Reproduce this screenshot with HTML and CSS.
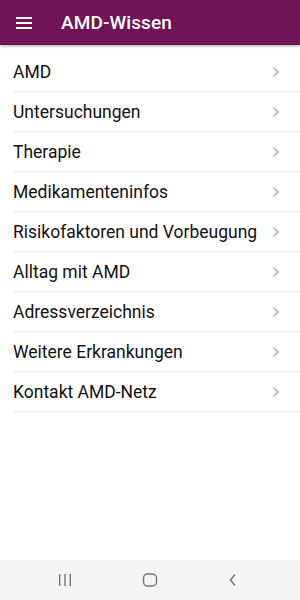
FILE: index.html
```html
<!DOCTYPE html>
<html lang="de">
<head>
<meta charset="utf-8">
<link rel="stylesheet" href="styles.css">
</head>
<body>
<div class="screen">
  <header class="appbar">
    <svg class="menu" width="16" height="12" viewBox="0 0 16 12"><rect x="0" y="0" width="16" height="2" fill="#fff"/><rect x="0" y="5" width="16" height="2" fill="#fff"/><rect x="0" y="10" width="16" height="2" fill="#fff"/></svg>
    <h1 class="title">AMD-Wissen</h1>
  </header>
  <ul class="list">
    <li class="item"><span>AMD</span><svg class="chev" width="8" height="12" viewBox="0 0 8 12"><path d="M1.5 1.5 L6 6 L1.5 10.5" fill="none" stroke="#b8b8b8" stroke-width="1.6"/></svg></li>
    <li class="item"><span>Untersuchungen</span><svg class="chev" width="8" height="12" viewBox="0 0 8 12"><path d="M1.5 1.5 L6 6 L1.5 10.5" fill="none" stroke="#b8b8b8" stroke-width="1.6"/></svg></li>
    <li class="item"><span>Therapie</span><svg class="chev" width="8" height="12" viewBox="0 0 8 12"><path d="M1.5 1.5 L6 6 L1.5 10.5" fill="none" stroke="#b8b8b8" stroke-width="1.6"/></svg></li>
    <li class="item"><span>Medikamenteninfos</span><svg class="chev" width="8" height="12" viewBox="0 0 8 12"><path d="M1.5 1.5 L6 6 L1.5 10.5" fill="none" stroke="#b8b8b8" stroke-width="1.6"/></svg></li>
    <li class="item"><span>Risikofaktoren und Vorbeugung</span><svg class="chev" width="8" height="12" viewBox="0 0 8 12"><path d="M1.5 1.5 L6 6 L1.5 10.5" fill="none" stroke="#b8b8b8" stroke-width="1.6"/></svg></li>
    <li class="item"><span>Alltag mit AMD</span><svg class="chev" width="8" height="12" viewBox="0 0 8 12"><path d="M1.5 1.5 L6 6 L1.5 10.5" fill="none" stroke="#b8b8b8" stroke-width="1.6"/></svg></li>
    <li class="item"><span>Adressverzeichnis</span><svg class="chev" width="8" height="12" viewBox="0 0 8 12"><path d="M1.5 1.5 L6 6 L1.5 10.5" fill="none" stroke="#b8b8b8" stroke-width="1.6"/></svg></li>
    <li class="item"><span>Weitere Erkrankungen</span><svg class="chev" width="8" height="12" viewBox="0 0 8 12"><path d="M1.5 1.5 L6 6 L1.5 10.5" fill="none" stroke="#b8b8b8" stroke-width="1.6"/></svg></li>
    <li class="item"><span>Kontakt AMD-Netz</span><svg class="chev" width="8" height="12" viewBox="0 0 8 12"><path d="M1.5 1.5 L6 6 L1.5 10.5" fill="none" stroke="#b8b8b8" stroke-width="1.6"/></svg></li>
  </ul>
  <nav class="navbar">
    <svg width="14" height="12" viewBox="0 0 14 12"><rect x="1" y="0" width="1.4" height="12" fill="#777"/><rect x="6.3" y="0" width="1.4" height="12" fill="#777"/><rect x="11.6" y="0" width="1.4" height="12" fill="#777"/></svg>
    <svg width="16" height="14" viewBox="0 0 16 14"><rect x="1.5" y="1" width="13" height="12" rx="4" fill="none" stroke="#777" stroke-width="1.5"/></svg>
    <svg width="10" height="14" viewBox="0 0 10 14"><path d="M7 1.5 L2.5 7 L7 12.5" fill="none" stroke="#777" stroke-width="1.5"/></svg>
  </nav>
</div>
</body>
</html>
```
FILE: styles.css
```css
* { box-sizing: border-box; }
html, body { margin: 0; padding: 0; }
body { font-family: Roboto, "Liberation Sans", sans-serif; background: #fff; }
.screen { width: 300px; height: 600px; display: flex; flex-direction: column; overflow: hidden; }
.appbar {
  height: 45px; flex: none;
  background: #6f1457;
  display: flex; align-items: center;
  padding-left: 16px;
  box-shadow: 0 1px 3px rgba(0,0,0,0.35);
  position: relative; z-index: 1;
}
.menu { display: block; flex: none; }
.title { margin: 0 0 0 29px; color: #fff; font-size: 19px; font-weight: 500; letter-spacing: 0.1px; }
.list { list-style: none; margin: 7px 0 0 13px; padding: 0; flex: 1; }
.item {
  height: 40px; display: flex; align-items: center; justify-content: space-between;
  border-bottom: 1px solid #e6e6e6;
  padding-right: 20px; padding-top: 1px;
  font-size: 17.5px; color: #111;
}
.chev { display: block; }
.navbar {
  height: 40px; flex: none; background: #f5f5f5;
  display: flex; align-items: center; justify-content: space-between;
  padding: 0 62px 0 58px;
}
.navbar svg { display: block; }
```
